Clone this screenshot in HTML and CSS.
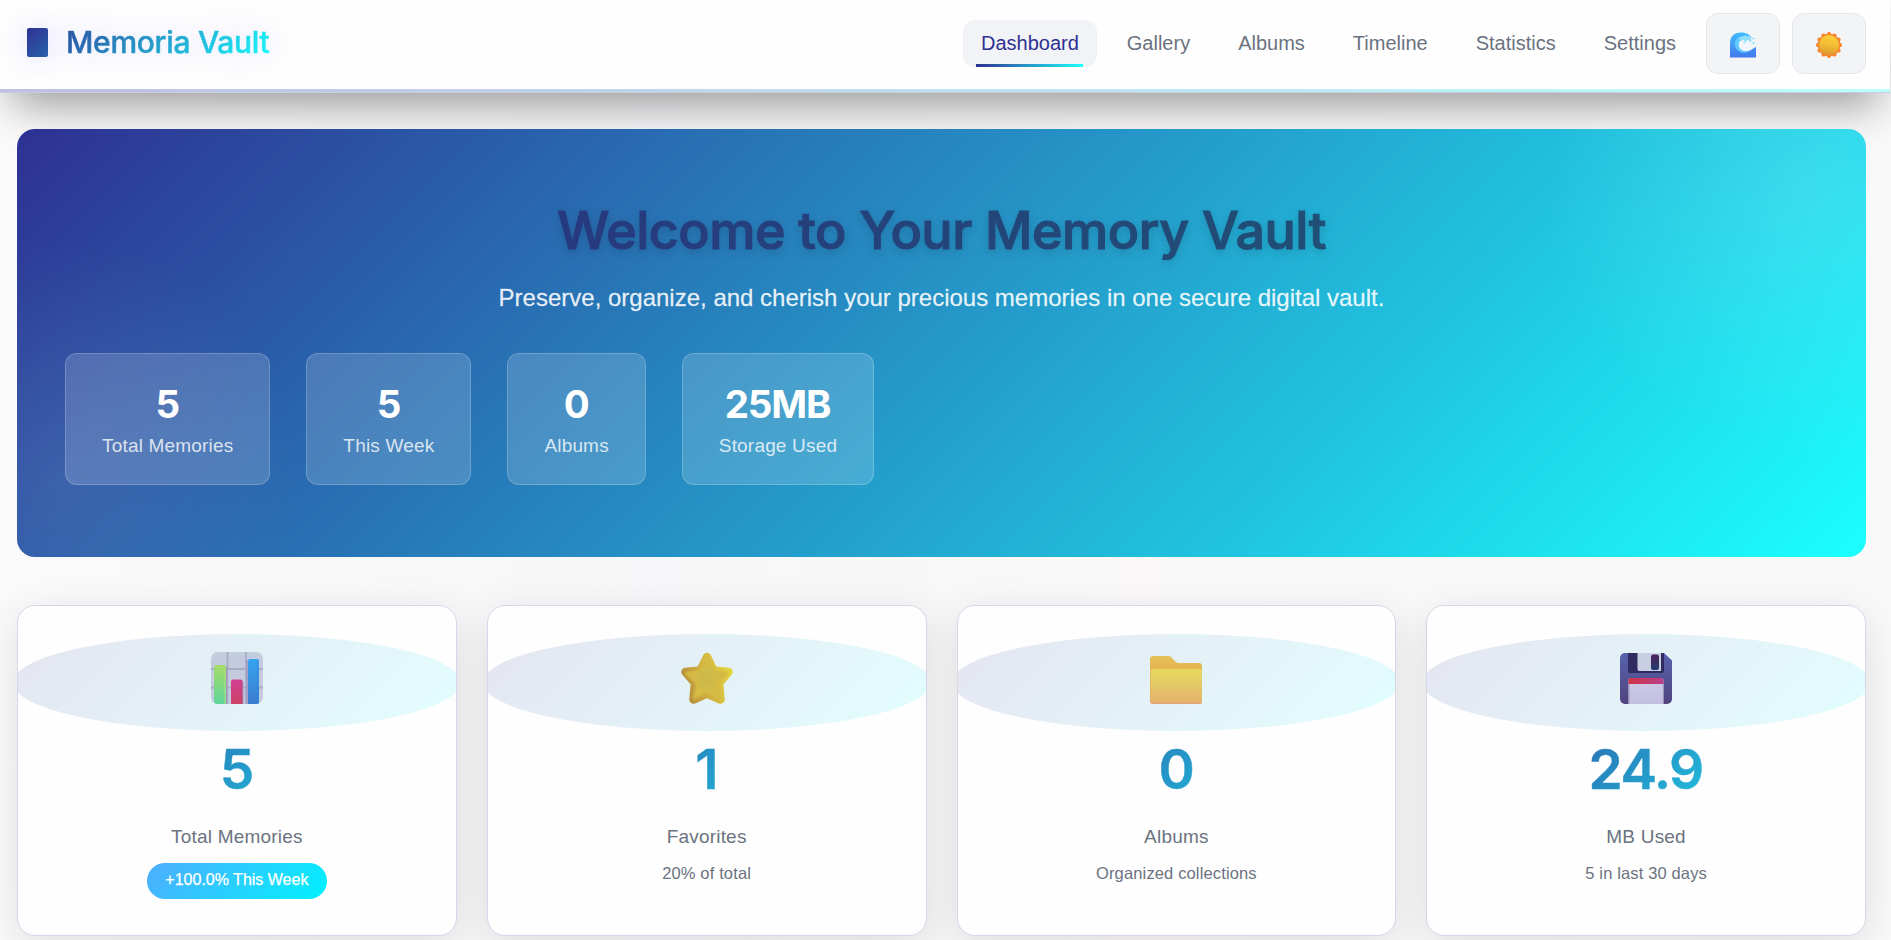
FILE: index.html
```html
<!DOCTYPE html>
<html lang="en">
<head>
<meta charset="utf-8">
<title>Memoria Vault</title>
<link rel="stylesheet" href="styles.css">
</head>
<body>
<header class="header">
  <div class="logo"><span class="logo-mark"></span><span class="logo-text">Memoria Vault</span></div>
  <nav class="nav">
    <a class="nav-link active">Dashboard</a>
    <a class="nav-link">Gallery</a>
    <a class="nav-link">Albums</a>
    <a class="nav-link">Timeline</a>
    <a class="nav-link">Statistics</a>
    <a class="nav-link">Settings</a>
    <button class="icon-btn" aria-label="Theme colour">
      <svg width="26" height="26" viewBox="0 0 26 26">
        <defs><linearGradient id="wave" x1="0" y1="0" x2="0" y2="1"><stop offset="0" stop-color="#3fbcff"/><stop offset=".55" stop-color="#4598f4"/><stop offset="1" stop-color="#4278ee"/></linearGradient></defs>
        <path d="M0 25.5V11C0 4.5 4.5.5 10.5.5c5 0 9 1.500 11 5L19 8c-5-1.500-9.500 1-9.500 5.500 0 4 3.500 6.500 7.500 6 4-.5 6-3.500 9-4.500v10.500z" fill="url(#wave)"/>
        <path d="M9 5c-3.500 2-4.800 5.500-3.800 9.300 1.200 4.400 5.800 6.900 10.300 6.200 2.200-.3 3.500-1.500 4.500-2.300-5 2-10.500.3-11-5C8.700 10 10.500 8 13 7z" fill="#62caff"/>
        <path d="M13 7c-3 .8-4.500 3.200-4.200 6.200.5 4.200 4.700 6.300 8.500 5.400 2-.5 3.200-2 3.700-3.600l-3-7z" fill="#f1f7fd"/>
        <g fill="#8fe0fc"><circle cx="11.500" cy="6.500" r="2.200"/><circle cx="15" cy="5.500" r="2.300"/><circle cx="19" cy="6" r="2.200"/><circle cx="15.500" cy="8" r="1.500"/><circle cx="20" cy="8.500" r="1.300"/><circle cx="23.500" cy="6.500" r="1.100"/><circle cx="23.500" cy="11" r="1.200"/><circle cx="14.500" cy="10.500" r="1"/></g>
      </svg>
    </button>
    <button class="icon-btn" aria-label="Light mode">
      <svg width="26" height="26" viewBox="0 0 26 26">
        <defs><linearGradient id="sun" x1=".6" y1="0" x2=".4" y2="1"><stop offset="0" stop-color="#ffd03b"/><stop offset=".5" stop-color="#f3bd36"/><stop offset="1" stop-color="#d9962f"/></linearGradient></defs>
        <g fill="#f6862f"><circle cx="13" cy="13" r="11.300"/><circle cx="13" cy="2.200" r="2.200"/><circle cx="18.400" cy="3.600" r="2.200"/><circle cx="22.400" cy="7.600" r="2.200"/><circle cx="23.800" cy="13" r="2.200"/><circle cx="22.400" cy="18.400" r="2.200"/><circle cx="18.400" cy="22.400" r="2.200"/><circle cx="13" cy="23.800" r="2.200"/><circle cx="7.600" cy="22.400" r="2.200"/><circle cx="3.600" cy="18.400" r="2.200"/><circle cx="2.200" cy="13" r="2.200"/><circle cx="3.600" cy="7.600" r="2.200"/><circle cx="7.600" cy="3.600" r="2.200"/></g>
        <circle cx="13" cy="13" r="10" fill="url(#sun)"/>
      </svg>
    </button>
  </nav>
</header>

<main class="main">
  <section class="hero">
    <h1 class="hero-title">Welcome to Your Memory Vault</h1>
    <p class="hero-sub">Preserve, organize, and cherish your precious memories in one secure digital vault.</p>
    <div class="hero-stats">
      <div class="hero-stat"><span class="hero-num">5</span><span class="hero-label">Total Memories</span></div>
      <div class="hero-stat"><span class="hero-num">5</span><span class="hero-label">This Week</span></div>
      <div class="hero-stat"><span class="hero-num">0</span><span class="hero-label">Albums</span></div>
      <div class="hero-stat"><span class="hero-num">25MB</span><span class="hero-label">Storage Used</span></div>
    </div>
  </section>

  <section class="cards">
    <article class="card">
      <div class="card-icon">
        <svg width="52" height="52" viewBox="0 0 52 52">
          <defs>
            <linearGradient id="cg" x1="0" y1="0" x2="0" y2="1"><stop offset="0" stop-color="#a6dc68"/><stop offset="1" stop-color="#5fd49a"/></linearGradient>
            <linearGradient id="cr" x1="0" y1="0" x2="0" y2="1"><stop offset="0" stop-color="#d03f91"/><stop offset="1" stop-color="#cb4368"/></linearGradient>
            <linearGradient id="cb" x1="0" y1="0" x2="0" y2="1"><stop offset="0" stop-color="#36a4f0"/><stop offset="1" stop-color="#3a7dcd"/></linearGradient>
            <clipPath id="cc"><rect width="52" height="52" rx="7"/></clipPath>
          </defs>
          <g clip-path="url(#cc)">
            <rect width="52" height="52" fill="#c5cbdf"/>
            <path d="M0 0h52v3H0z" fill="#c3d0db"/>
            <path d="M0 17h52M0 35.500h52M16.500 0v52M35 0v52" stroke="#a6adc5" stroke-width="1.800"/>
            <path d="M15.200 14v38M31.700 29v23M36 8v44" stroke="#a096c0" stroke-width="1.500"/>
            <path d="M3 52V15a2 2 0 0 1 2-2h8a2 2 0 0 1 2 2v37z" fill="url(#cg)"/>
            <path d="M20 52V29.500a2 2 0 0 1 2-2h7.500a2 2 0 0 1 2 2V52z" fill="url(#cr)"/>
            <path d="M37 52V9a2 2 0 0 1 2-2h7a2 2 0 0 1 2 2v43z" fill="url(#cb)"/>
            <path d="M14 15v37" stroke="#b6e27a" stroke-width="1.500" opacity=".6"/>
            <path d="M47 9v43" stroke="#2f86dc" stroke-width="1.500" opacity=".6"/>
          </g>
        </svg>
      </div>
      <div class="card-num">5</div>
      <div class="card-label">Total Memories</div>
      <div class="badge">+100.0% This Week</div>
    </article>
    <article class="card">
      <div class="card-icon">
        <svg width="52" height="52" viewBox="0 0 52 52">
          <defs>
            <linearGradient id="st" x1="0" y1=".6" x2="1" y2=".3"><stop offset="0" stop-color="#b8923c"/><stop offset=".4" stop-color="#cfae42"/><stop offset="1" stop-color="#e3d43e"/></linearGradient>
            <radialGradient id="sc"><stop offset="0" stop-color="#cab94b"/><stop offset="1" stop-color="#d8bb44"/></radialGradient>
            <filter id="sb" x="-20%" y="-20%" width="140%" height="140%"><feGaussianBlur stdDeviation="1.200"/></filter>
          </defs>
          <path d="M26 5 32.500 18.500 47.500 20 38 31 39.500 47.500 26 41.500 12.500 47.500 14 31 4.500 20 19.500 18.500z" fill="url(#st)" stroke="url(#st)" stroke-width="8.500" stroke-linejoin="round"/>
          <path d="M26 6 33 19.500 46 21.500 35.500 32 38.500 46 26 39.500 13.500 46 16.500 32 6 21.500 19 19.500z" fill="url(#sc)" stroke="#d6b943" stroke-width="3" stroke-linejoin="round" filter="url(#sb)"/>
        </svg>
      </div>
      <div class="card-num">1</div>
      <div class="card-label">Favorites</div>
      <div class="card-sub">20% of total</div>
    </article>
    <article class="card">
      <div class="card-icon">
        <svg width="52" height="52" viewBox="0 0 52 52">
          <defs>
            <linearGradient id="fb" x1="0" y1="0" x2="0" y2="1"><stop offset="0" stop-color="#e4c257"/><stop offset=".3" stop-color="#e5b352"/><stop offset="1" stop-color="#e2a860"/></linearGradient>
            <linearGradient id="ff" x1="0" y1="0" x2="0" y2="1"><stop offset="0" stop-color="#e4d95d"/><stop offset=".5" stop-color="#e4c767"/><stop offset=".93" stop-color="#e5b36d"/><stop offset="1" stop-color="#e3a376"/></linearGradient>
          </defs>
          <path d="M0 49V7a3 3 0 0 1 3-3h15.500c1 0 1.800.4 2.500 1l5 5c.8.7 1.500 1 2.500 1H49a3 3 0 0 1 3 3v35a3 3 0 0 1-3 3H3a3 3 0 0 1-3-3z" fill="url(#fb)"/>
          <rect x=".7" y="17" width="51.300" height="35" rx="2.500" fill="url(#ff)"/>
        </svg>
      </div>
      <div class="card-num">0</div>
      <div class="card-label">Albums</div>
      <div class="card-sub">Organized collections</div>
    </article>
    <article class="card">
      <div class="card-icon">
        <svg width="52" height="52" viewBox="0 0 52 52">
          <defs>
            <linearGradient id="db" x1="0" y1="0" x2="0" y2="1"><stop offset="0" stop-color="#5663ae"/><stop offset="1" stop-color="#51437e"/></linearGradient>
            <linearGradient id="dr" x1="0" y1="0" x2="1" y2="0"><stop offset="0" stop-color="#cf3345"/><stop offset="1" stop-color="#b93f8b"/></linearGradient>
            <linearGradient id="ds" x1="0" y1="0" x2="0" y2="1"><stop offset="0" stop-color="#4b2357"/><stop offset="1" stop-color="#253c70"/></linearGradient>
            <linearGradient id="dp" x1="0" y1="0" x2="0" y2="1"><stop offset="0" stop-color="#cdcbe5"/><stop offset="1" stop-color="#c2bfe1"/></linearGradient>
          </defs>
          <path d="M5 1h39l8 7.500V47a5 5 0 0 1-5 5H5a5 5 0 0 1-5-5V6a5 5 0 0 1 5-5z" fill="url(#db)"/>
          <path d="M8 1h36v18a2 2 0 0 1-2 2H10a2 2 0 0 1-2-2z" fill="#302b60"/>
          <path d="M17.500 1H41v18H19.500a2 2 0 0 1-2-2z" fill="#c9cfe3"/>
          <rect x="31" y="2.500" width="8" height="15.500" rx="2" fill="url(#ds)"/>
          <path d="M8.500 52V28.500a2.500 2.500 0 0 1 2.500-2.500h30a2.500 2.500 0 0 1 2.500 2.500V52z" fill="url(#dp)"/>
          <path d="M8.500 32v-3.500a2.500 2.500 0 0 1 2.500-2.500h30a2.500 2.500 0 0 1 2.500 2.500V32z" fill="url(#dr)"/>
          <path d="M9 32v20M43.300 32v20" stroke="#9f99c2" stroke-width="1"/>
        </svg>
      </div>
      <div class="card-num">24.9</div>
      <div class="card-label">MB Used</div>
      <div class="card-sub">5 in last 30 days</div>
    </article>
  </section>
</main>
</body>
</html>
```
FILE: styles.css
```css
* { box-sizing: border-box; margin: 0; padding: 0; }

:root {
  --primary: linear-gradient(135deg, #2e3192 0%, #1bffff 100%);
  --muted: #6b7280;
  --display: Inter, "Liberation Sans", sans-serif;
}

body {
  height: 940px;
  overflow: hidden;
  background: linear-gradient(90deg, #fafafa 0%, #f7f7f9 35%, #faf8f8 60%, #f9f9f9 100%);
  font-family: "Liberation Sans", Arial, sans-serif;
  color: var(--muted);
}

.header {
  position: relative;
  width: 1890px;
  height: 93px;
  padding: 0 24px 6px 27px;
  display: flex;
  align-items: center;
  justify-content: space-between;
  background: #fefefe;
  border-bottom: 1px solid #c9cbe0;
  box-shadow: 0 24px 44px -12px rgba(0, 0, 0, .39);
}

.header::after {
  content: "";
  position: absolute;
  left: 0;
  right: 0;
  bottom: 0;
  height: 3px;
  background: linear-gradient(90deg, #2e3192, #1bffff);
  opacity: .3;
}

.logo {
  display: flex;
  align-items: center;
  width: 243px;
  height: 44px;
  background: var(--primary);
  background-clip: text;
  -webkit-background-clip: text;
  color: transparent;
  filter: drop-shadow(0 0 15px rgba(90, 80, 255, .22));
  font-family: var(--display);
  font-size: 30px;
  font-weight: 500;
  letter-spacing: -.3px;
  line-height: 44px;
  white-space: nowrap;
  -webkit-text-stroke: .5px transparent;
}

.logo-mark {
  width: 21px;
  height: 29px;
  margin: -1px 18px 0 0;
  border-radius: 2px;
  background: linear-gradient(135deg, #2e3192, #2a62ab);
}

.logo-text { margin-top: -2px; }

.nav { display: flex; align-items: center; gap: 12px; }

.nav-link {
  position: relative;
  height: 47px;
  padding: 0 18px;
  border-radius: 12px;
  font-size: 20px;
  line-height: 46px;
  color: var(--muted);
}

.nav-link.active { color: #2e3192; background: #f2f3f6; }

.nav-link.active::after {
  content: "";
  position: absolute;
  left: 10%;
  width: 80%;
  bottom: 0;
  height: 3px;
  background: linear-gradient(90deg, #2e3192, #1bffff);
}

.icon-btn {
  width: 74px;
  height: 61px;
  display: flex;
  align-items: center;
  justify-content: center;
  padding-top: 3px;
  border: 1px solid #e5e7eb;
  border-radius: 12px;
  background: #f3f4f6;
}

.main { padding: 36px 25px 0 17px; }

.hero {
  position: relative;
  height: 428px;
  padding: 73px 48px 0;
  border-radius: 18px;
  text-align: center;
  background:
    radial-gradient(circle at 1794px 62px, rgba(255, 255, 255, .12), rgba(255, 255, 255, 0) 265px),
    radial-gradient(circle at 45px 350px, rgba(255, 255, 255, .08), rgba(255, 255, 255, 0) 240px),
    var(--primary);
}

.hero-title {
  font-family: var(--display);
  font-size: 52px;
  font-weight: 500;
  line-height: 58px;
  letter-spacing: -.5px;
  background: linear-gradient(90deg, #27397f 27%, #204f75 73%);
  background-clip: text;
  -webkit-background-clip: text;
  color: transparent;
  -webkit-text-stroke: 1.2px transparent;
  filter: drop-shadow(0 3px 4px rgba(0, 0, 0, .14));
}

.hero-sub {
  margin: 18px 0 35px;
  font-size: 24px;
  line-height: 40px;
  color: rgba(255, 255, 255, .9);
  -webkit-text-stroke: .3px rgba(255, 255, 255, .6);
}

.hero-stats { display: flex; gap: 36px; }

.hero-stat {
  height: 132px;
  padding: 30px 36px 0;
  display: flex;
  flex-direction: column;
  border: 1px solid rgba(255, 255, 255, .2);
  border-radius: 12px;
  background: rgba(255, 255, 255, .16);
}

.hero-num {
  padding-right: 1px;
  font-family: var(--display);
  font-size: 38.500px;
  font-weight: 700;
  line-height: 40px;
  letter-spacing: -1.200px;
  color: #fff;
}

.hero-label {
  margin-top: 7px;
  font-size: 19px;
  line-height: 30px;
  letter-spacing: .18px;
  color: rgba(255, 255, 255, .8);
}

.cards {
  display: grid;
  grid-template-columns: repeat(4, 1fr);
  gap: 30px;
  margin-top: 48px;
}

.card {
  height: 330.500px;
  padding-top: 28px;
  display: flex;
  flex-direction: column;
  align-items: center;
  overflow: hidden;
  border: 1px solid #d7d6ea;
  border-radius: 18px;
  background: #fefefe;
  box-shadow: 0 10px 42px rgba(0, 0, 0, .11);
}

.card-icon {
  flex: none;
  width: 448px;
  height: 97px;
  display: flex;
  justify-content: center;
  padding-top: 18px;
  border-radius: 50%;
  background: linear-gradient(135deg, rgba(46, 49, 146, .12), rgba(27, 255, 255, .12));
}

.card-num {
  align-self: stretch;
  margin-top: 8px;
  padding-right: 1px;
  text-align: center;
  font-family: var(--display);
  font-size: 55px;
  font-weight: 600;
  line-height: 60px;
  letter-spacing: -1.500px;
  background: var(--primary);
  background-clip: text;
  -webkit-background-clip: text;
  color: transparent;
  -webkit-text-stroke: .5px transparent;
}

.card-label {
  margin-top: 24px;
  font-size: 19px;
  line-height: 28px;
  letter-spacing: .2px;
}

.card-sub {
  margin-top: 10px;
  font-size: 16.500px;
  line-height: 24px;
  letter-spacing: .14px;
}

.badge {
  height: 36px;
  width: 180px;
  margin-top: 12px;
  border-radius: 18px;
  text-align: center;
  font-size: 16px;
  line-height: 33px;
  color: #fff;
  -webkit-text-stroke: .25px #fff;
  background: linear-gradient(135deg, #4facfe, #00f2fe);
}
```
